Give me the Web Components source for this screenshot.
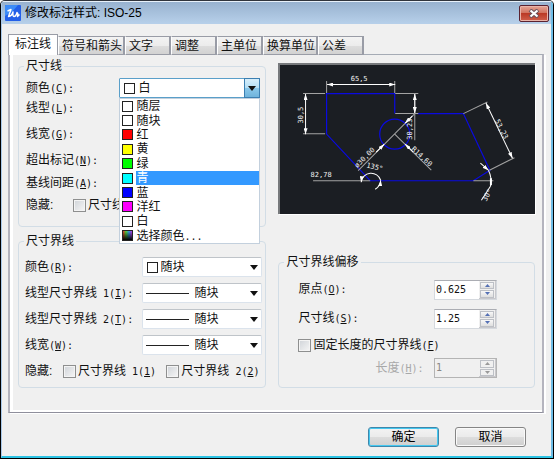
<!DOCTYPE html>
<html lang="zh-CN">
<head>
<meta charset="utf-8">
<title>修改标注样式: ISO-25</title>
<style>
  body {
    margin: 0;
    background: #fff;
    color: #111;
    font: 12px/16px "Liberation Sans", "Noto Sans CJK SC", sans-serif;
    --mono: "DejaVu Sans Mono", "Noto Sans CJK SC", monospace;
  }
  .columns { display: grid; grid-template-columns: 248fr 256fr; gap: 12px; }
  .left, .right { display: flex; flex-direction: column; min-width: 0; }
  .left { gap: 6px; }
  .right { justify-content: space-between; padding-top: 5px; }
  .rows { display: grid; }
  .dim { grid-template-rows: 20px 20px 32px 20px 26px 18px; align-items: center; padding: 4px 5px 12px 7px; }
  .ext { gap: 6px; padding: 8px 3px 6px 6px; }
  .off { grid-template-rows: 29px 29px 25px 20px; align-items: center; padding: 5px 37px 9px 19px; }
  .checks { display: flex; align-items: center; height: 20px; }
  .checks > span { flex: none; width: 38px; }
  .dim .checks > span { width: 47px; }
  .checks check-field + check-field { margin-left: auto; margin-right: 3px; }
</style>
</head>
<body>
<dialog-window heading="修改标注样式: ISO-25">
  <tab-item slot="tabs" selected>标注线</tab-item>
  <tab-item slot="tabs">符号和箭头</tab-item>
  <tab-item slot="tabs">文字</tab-item>
  <tab-item slot="tabs">调整</tab-item>
  <tab-item slot="tabs">主单位</tab-item>
  <tab-item slot="tabs">换算单位</tab-item>
  <tab-item slot="tabs">公差</tab-item>

  <div class="columns">
    <div class="left">
      <group-box heading="尺寸线">
        <div class="rows dim">
          <combo-field label="颜色" key="C" value="白" mark="swatch" wide open></combo-field>
          <combo-field label="线型" key="L" wide></combo-field>
          <combo-field label="线宽" key="G" wide></combo-field>
          <combo-field label="超出标记" key="N" wide></combo-field>
          <combo-field label="基线间距" key="A" wide></combo-field>
          <div class="checks"><span>隐藏:</span><check-field label="尺寸线"></check-field></div>
        </div>
      </group-box>
      <group-box heading="尺寸界线">
        <div class="rows ext">
          <combo-field label="颜色" key="R" value="随块" mark="swatch"></combo-field>
          <combo-field label="线型尺寸界线" num="1" key="I" value="随块" mark="line"></combo-field>
          <combo-field label="线型尺寸界线" num="2" key="T" value="随块" mark="line"></combo-field>
          <combo-field label="线宽" key="W" value="随块" mark="line"></combo-field>
          <div class="checks"><span>隐藏:</span><check-field label="尺寸界线" num="1" key="1"></check-field><check-field label="尺寸界线" num="2" key="2"></check-field></div>
        </div>
      </group-box>
    </div>
    <div class="right">
      <dimension-preview></dimension-preview>
      <group-box heading="尺寸界线偏移">
        <div class="rows off">
          <spin-field label="原点" key="O" value="0.625"></spin-field>
          <spin-field label="尺寸线" key="S" value="1.25"></spin-field>
          <check-field label="固定长度的尺寸界线" key="F"></check-field>
          <spin-field label="长度" key="H" value="1" disabled></spin-field>
        </div>
      </group-box>
    </div>
  </div>

  <push-button slot="actions" primary>确定</push-button>
  <push-button slot="actions">取消</push-button>
</dialog-window>

<script>
const labelStyle = `
  * { box-sizing: border-box; }
  label { white-space: nowrap; }
  .m { font-family: var(--mono); font-size: 10px; }
`;
const labelText = (el, tail) => {
  const num = el.getAttribute('num');
  const key = el.getAttribute('key');
  return el.getAttribute('label') + (key || num
    ? `<span class="m">${num ? '&nbsp;' + num : ''}${key ? `(<u>${key}</u>)` : ''}${tail}</span>` : '');
};
const define = (name, render) => customElements.define(name, class extends HTMLElement {
  constructor() { super(); this.attachShadow({ mode: 'open' }); }
  connectedCallback() { this.shadowRoot.innerHTML = render(this); }
});

define('dialog-window', el => `
<style>
  * { box-sizing: border-box; }
  :host { display: block; padding-bottom: 1px; }
  .frame { background: #f0f0f0; border: 1px solid #000; border-top-color: #30343c; border-radius: 5px 5px 0 0; }
  .inner { border: 1px solid #a9c9ea; border-right: 2px solid #6fbde6; border-bottom: 2px solid #2cc3e4; border-top-color: #e8f1fa; border-radius: 4px 4px 0 0; }
  header { display: flex; align-items: center; gap: 4px; height: 22px; padding: 0 2px 0 3px; background: linear-gradient(#98b2cf, #b7d0ea); }
  h1 { flex: 1; margin: 0; font-size: 12px; line-height: 16px; font-weight: 400; color: #000; }
  .logo { display: block; width: 16px; height: 16px; }
  .close { display: grid; place-items: center; width: 30px; height: 17px; padding: 0; border: 1px solid #5a2230; border-radius: 2px; background: linear-gradient(#e5a596, #d0705c 48%, #bb3a26 50%, #d0604c); box-shadow: inset 0 0 0 1px #e9b3a8; }
  .content { padding: 10px 7px 0 6px; }
  nav { display: flex; align-items: flex-end; position: relative; }
  .panel { margin-top: -1px; padding: 3px 7px 24px 8px; background: #f0f0f0; border: 1px solid #8f8f9c; border-left: 2px solid #b4b4be; border-right: 2px solid #b4b4be; border-top-color: #a5abb5; box-shadow: inset 3px 0 #fff, inset 0 -2px #fff, 2px 1px #fff; }
  footer { display: flex; justify-content: flex-end; gap: 16px; padding: 14px 18px 9px; }
</style>
<div class="frame"><div class="inner">
  <header>
    <svg class="logo" viewBox="0 0 16 16"><rect width="16" height="16" rx="1" fill="#235fe8"/><path d="M0 11V1q0-1 1-1h12L7 7z" fill="#3d8cf7"/><path d="M2.500 6l3.500-1.500-2.500 7q3.500-.5 4.500-4.500-.5 4.500 1 4.500 2 0 3-4 1.500 1 .5 4l2-2" fill="none" stroke="#fff" stroke-width="1.400" stroke-linejoin="round"/></svg>
    <h1>${el.getAttribute('heading')}</h1>
    <button class="close" aria-label="关闭"><svg width="12" height="9" viewBox="0 0 12 9"><path d="M2 1l8 7M10 1L2 8" stroke="#68515c" stroke-width="4"/><path d="M2.500 1.500l7 6M9.500 1.500l-7 6" stroke="#fff" stroke-width="2.200"/></svg></button>
  </header>
  <div class="content">
    <nav role="tablist"><slot name="tabs"></slot></nav>
    <div class="panel"><slot></slot></div>
    <footer><slot name="actions"></slot></footer>
  </div>
</div></div>`);

define('tab-item', el => `
<style>
  :host { display: block; }
  :host([selected]) { position: relative; }
  button { display: block; box-sizing: border-box; min-width: 46px; height: 19px; padding: 0 1px 0 3px; border: 1px solid #999ca6; border-left-color: #fff; border-right-width: 2px; font: inherit; line-height: 16px; color: #111; text-align: left; background: linear-gradient(#f3f3f3, #ececec 50%, #dddddd 52%, #d2d2d2); }
  :host([selected]) button { height: 21px; padding: 0 6px 2px 6px; border-left-color: #999ca6; border-right-width: 1px; border-bottom: 0; background: #fff; }
</style>
<button role="tab" aria-selected="${el.hasAttribute('selected')}"><slot></slot></button>`);

define('group-box', el => `
<style>
  :host { display: block; }
  fieldset { margin: 0; padding: 0; min-width: 0; border: 1px solid #d2dde6; border-radius: 4px; box-shadow: none; }
  legend { margin-left: 5px; padding: 0 2px; line-height: 16px; }
</style>
<fieldset><legend>${el.getAttribute('heading')}</legend><slot></slot></fieldset>`);

const colours = [['随层', '#fff'], ['随块', '#fff'], ['红', '#f00'], ['黄', '#ff0'], ['绿', '#0f0'],
  ['青', '#0ff'], ['蓝', '#00f'], ['洋红', '#f0f'], ['白', '#fff'],
  ['选择颜色...', 'linear-gradient(to bottom, transparent, #000), linear-gradient(to right, #e33, #5d3, #39e, #c3e)']];

define('combo-field', el => {
  const mark = el.getAttribute('mark');
  const value = el.getAttribute('value') || '';
  return `
<style>${labelStyle}
  :host { display: flex; align-items: center; justify-content: space-between; }
  .box { position: relative; width: 120px; height: 20px; flex: none; }
  :host([wide]) .box { width: 141px; }
  select { appearance: none; display: block; width: 100%; height: 100%; padding: 0 20px 0 17px; border: 1px solid #dbe3ec; border-top-color: #bfc4c9; border-radius: 2px; background: #fff; color: #111; font: inherit; }
  :host([mark=line]) select { padding-left: 51px; }
  :host([open]) select { border-color: #5a9fc9; border-radius: 1px; padding-left: 18px; }
  .mark { position: absolute; left: 5px; top: 5px; width: 11px; height: 11px; border: 1px solid #222; background: #fff; pointer-events: none; }
  .line { position: absolute; left: 4px; top: 10px; width: 43px; height: 1px; background: #222; pointer-events: none; }
  .arrow { position: absolute; right: 0; top: 0; width: 16px; height: 20px; display: grid; place-items: center; pointer-events: none; }
  :host([open]) .arrow { border: 1px solid #3c7fb1; background: linear-gradient(#d7eefa, #b5dff5 48%, #8ac8ea 50%, #70b4dc); }
  ul { position: absolute; z-index: 5; left: 0; right: 0; top: 20px; height: 146px; display: grid; grid-auto-rows: 1fr; margin: 0; padding: 0; list-style: none; background: #fff; border: 1px solid #c3d0dd; }
  li { display: grid; grid-template-columns: 11px 1fr; gap: 3px; align-items: center; padding-left: 2px; min-height: 0; }
  li i { height: 11px; border: 1px solid #222; }
  li span { height: 14px; line-height: 14px; }
  li[aria-selected=true] span { background: #3399ff; color: #fff; }
</style>
<label for="c">${labelText(el, ':')}</label>
<div class="box">
  <select id="c">${value ? `<option>${value}</option>` : ''}</select>
  ${mark === 'swatch' ? '<span class="mark"></span>' : mark === 'line' ? '<span class="line"></span>' : ''}
  <span class="arrow"><svg width="8" height="5" viewBox="0 0 8 5"><path d="M0 0h8L4 5z" fill="#111"/></svg></span>
  ${el.hasAttribute('open') ? `<ul role="listbox">${colours.map(([n, c]) =>
    `<li role="option" aria-selected="${n === '青'}"><i style="background:${c}"></i><span>${n.replace('...', '<b class="m" style="font-weight:400">...</b>')}</span></li>`).join('')}</ul>` : ''}
</div>`;
});

define('check-field', el => `
<style>${labelStyle}
  :host { display: flex; align-items: center; }
  label { display: flex; align-items: center; gap: 2px; }
  input { appearance: none; margin: 0; width: 13px; height: 13px; border: 1px solid #8e8f8f; background: linear-gradient(135deg, #cfd3d8, #f6f6f6); box-shadow: inset 0 0 0 1px #f4f4f4; }
</style>
<label><input type="checkbox"><span>${labelText(el, '')}</span></label>`);

define('spin-field', el => {
  const off = el.hasAttribute('disabled') ? 'disabled' : '';
  return `
<style>${labelStyle}
  :host { display: flex; align-items: center; justify-content: space-between; }
  :host([disabled]) { color: #a8a8a8; padding-left: 77px; }
  .box { display: flex; width: 63px; height: 20px; flex: none; border: 1px solid #d5d9de; border-top-color: #abadb3; background: #f0f0f0; box-shadow: inset -1px -1px #c8c8cc; }
  input { flex: 1; min-width: 0; margin: 0; padding: 0 1px; border: 0; background: #fff; color: #111; font: 10px/16px var(--mono); }
  .arrows { display: flex; flex-direction: column; width: 17px; padding: 1px 2px 1px 1px; gap: 1px; }
  button { flex: 1; min-height: 0; display: grid; place-items: center; padding: 0; border: 1px solid #bdc0c6; background: linear-gradient(#f8f8f8, #dfdfdf); color: #5470b4; }
  :host([disabled]) .box { border-color: #b4b4b4; }
  :host([disabled]) input { background: #f0f0f0; color: #888; }
  :host([disabled]) button { color: #999; background: #f0f0f0; }
</style>
<label for="s">${labelText(el, ':')}</label>
<div class="box"><input id="s" type="text" value="${el.getAttribute('value')}" ${off}>
  <div class="arrows">
    <button ${off} aria-label="增加"><svg width="5" height="3" viewBox="0 0 5 3"><path d="M0 3h5L2.500 0z" fill="currentColor"/></svg></button>
    <button ${off} aria-label="减少"><svg width="5" height="3" viewBox="0 0 5 3"><path d="M0 0h5L2.500 3z" fill="currentColor"/></svg></button>
  </div></div>`;
});

define('push-button', () => `
<style>
  :host { display: block; }
  button { display: block; box-sizing: border-box; width: 71px; height: 20px; padding: 0; border: 1px solid #858585; border-radius: 3px; font: inherit; line-height: 16px; color: #000; background: linear-gradient(#f3f3f3, #ebebeb 48%, #dddddd 50%, #cfcfcf); box-shadow: inset 0 0 0 1px #fafafa; }
  :host([primary]) button { border-color: #3f87ab; box-shadow: inset 0 0 0 1px #45c8f0; }
</style>
<button><slot></slot></button>`);

define('dimension-preview', () => `
<style>
  :host { display: block; background: #1b1e23; border: 2px solid #77797c; border-right: 0; border-bottom: 0; box-shadow: 1px 1px #fff; }
  svg { display: block; width: 100%; }
  text { font: 7px "DejaVu Sans Mono", monospace; fill: #f2f2f2; text-anchor: middle; }
</style>
<svg viewBox="280 65 254 149" role="img" aria-label="标注预览">
  <defs><marker id="a" viewBox="0 0 6 4" refX="6" refY="2" markerWidth="6" markerHeight="4" markerUnits="userSpaceOnUse" orient="auto-start-reverse"><path d="M0 0L6 2 0 4z" fill="#fff"/></marker></defs>
  <g fill="none" stroke="#0a0ae0" stroke-width="1.200">
    <path d="M394.500 113.500V93.500H326.500V134L370 180.500H473L489.500 170 463 113.500H417"/>
    <circle cx="394.500" cy="134" r="15"/>
  </g>
  <g fill="none" stroke="#a3a3a3">
    <path d="M326.500 81V93M394.500 81V93M303 93.500H325M303 133.500H325M395 93.500H418M395 113.500H418M414.500 93V140M313 180.500H370M463 113.500L487 102M489 170L514 157.500M473 180.500H493"/>
    <path d="M358 170.500L415 113M394.500 134L431 170"/>
  </g>
  <g fill="none" stroke="#fff">
    <path d="M327 84.500H395" marker-start="url(#a)" marker-end="url(#a)"/>
    <path d="M305.500 94V134" marker-start="url(#a)" marker-end="url(#a)"/>
    <path d="M414.500 94V113" marker-start="url(#a)" marker-end="url(#a)"/>
    <path d="M485.500 103L512 158" marker-start="url(#a)" marker-end="url(#a)"/>
    <path d="M376 152L384 144" marker-end="url(#a)"/><path d="M412 116L405 123" marker-end="url(#a)"/><path d="M413 152L405 144" marker-end="url(#a)"/>
    <path d="M361 182A10 10 0 0 1 380.500 180" marker-start="url(#a)"/><path d="M375 189Q380 186 380.500 180" marker-end="url(#a)"/>
    <path d="M480 163L488 170" marker-end="url(#a)"/><path d="M488 170Q492 178 490 186L481 200"/>
    <path d="M490.500 178v7" stroke-width="2"/>
  </g>
  <text x="359" y="81">65,5</text>
  <text transform="translate(303 115) rotate(-90)">30,5</text>
  <text transform="translate(412 129) rotate(-90)">30,23</text>
  <text transform="translate(366 159) rotate(-45)">ø30,00</text>
  <text transform="translate(420 158) rotate(43)">R14,60</text>
  <text transform="translate(499 130) rotate(63)">53,23</text>
  <text x="321" y="177">82,78</text>
  <text transform="translate(374 169) rotate(14)">135°</text>
  <text transform="translate(489 196) rotate(-60)">30°</text>
</svg>`);
</script>
</body>
</html>
